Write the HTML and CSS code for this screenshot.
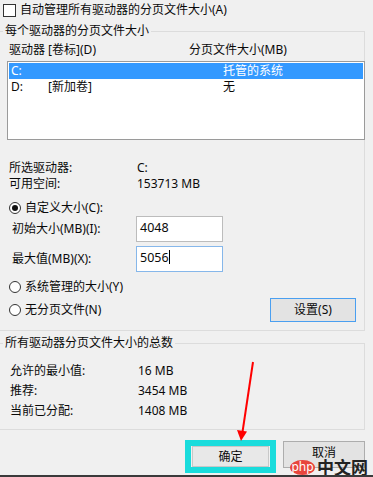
FILE: index.html
```html
<!DOCTYPE html>
<html lang="zh-CN">
<head>
  <meta charset="UTF-8" />
  <meta name="viewport" content="width=device-width, initial-scale=1.0"/>
  <title>虚拟内存</title>
  <link rel="stylesheet" href="styles.css">
</head>
<body>

<div class="dialog">
  <div class="auto-row"><span class="checkbox"></span>自动管理所有驱动器的分页文件大小(A)</div>

  <fieldset class="group group-drive">
    <legend>每个驱动器的分页文件大小</legend>
    <div class="list-head">
      <span>驱动器 [卷标](D)</span>
      <span>分页文件大小(MB)</span>
    </div>
    <div class="listbox">
      <div class="list-row selected"><span>C:</span><span></span><span>托管的系统</span></div>
      <div class="list-row"><span>D:</span><span>[新加卷]</span><span>无</span></div>
    </div>

    <div class="info">
      <span>所选驱动器:</span><span>C:</span>
      <span>可用空间:</span><span>153713 MB</span>
    </div>

    <div class="radio-row custom"><span class="radio checked"></span>自定义大小(C):</div>
    <div class="field-row">
      <span>初始大小(MB)(I):</span>
      <div class="input">4048</div>
    </div>
    <div class="field-row second">
      <span>最大值(MB)(X):</span>
      <div class="input focus">5056<span class="caret"></span></div>
    </div>

    <div class="options">
      <div class="radios">
        <div class="radio-row"><span class="radio"></span>系统管理的大小(Y)</div>
        <div class="radio-row"><span class="radio"></span>无分页文件(N)</div>
      </div>
      <div class="btn set-btn">设置(S)</div>
    </div>
  </fieldset>

  <fieldset class="group group-total">
    <legend>所有驱动器分页文件大小的总数</legend>
    <div class="totals">
      <span>允许的最小值:</span><span>16 MB</span>
      <span>推荐:</span><span>3454 MB</span>
      <span>当前已分配:</span><span>1408 MB</span>
    </div>
  </fieldset>

  <div class="actions">
    <div class="highlight"><div class="btn ok-btn">确定</div></div>
    <div class="btn cancel-btn">取消</div>
  </div>
</div>

<svg class="arrow" width="373" height="477" viewBox="0 0 373 477">
  <line x1="253" y1="362" x2="242.5" y2="432" stroke="#ff0000" stroke-width="2"/>
  <polygon points="237,430 247,431.5 241,441" fill="#ff0000"/>
</svg>

<div class="watermark"><span class="php">php</span><span class="cn">中文网</span></div>
<div class="bottom-bar"></div>

</body>
</html>
```

FILE: styles.css
```css
* { box-sizing: border-box; }
body {
  margin: 0;
  width: 373px;
  height: 477px;
  overflow: hidden;
  position: relative;
  background: #f0f0f0;
  color: #0a0a0a;
  font-family: "Noto Sans", "Noto Sans CJK SC", sans-serif;
  font-size: 12px;
  line-height: 16px;
}
.auto-row {
  display: flex;
  align-items: center;
  gap: 4px;
  height: 17px;
  padding: 3px 0 0 3px;
}
.checkbox {
  width: 13px;
  height: 13px;
  background: #fff;
  border: 1px solid #333;
}
.group {
  margin: 6px 0 0 -1px;
  width: 366px;
  padding: 0 0 8px 0;
  border: 1px solid #dcdcdc;
  min-width: 0;
}
.group legend {
  margin-left: 3px;
  padding: 0 2px;
  line-height: 16px;
}
.list-head {
  display: flex;
  margin-top: 3px;
  padding-left: 9px;
}
.list-head span:first-child { width: 180px; }
.listbox {
  margin: 3px -1px 0 7px;
  height: 79px;
  background: #fff;
  border: 1px solid #9a9a9a;
  padding: 1px;
}
.list-row {
  display: grid;
  grid-template-columns: 37px 175px 1fr;
  height: 16px;
  padding-left: 2px;
}
.list-row.selected {
  background: #3399ff;
  color: #fff;
}
.info, .totals {
  display: grid;
  grid-template-columns: 128px 1fr;
  margin-top: 20px;
  padding-left: 9px;
}
.radio-row {
  display: flex;
  align-items: center;
  gap: 4px;
  height: 16px;
  padding-left: 9px;
}
.radio-row.custom { margin-top: 8px; }
.radio {
  position: relative;
  width: 12px;
  height: 12px;
  border: 1px solid #333;
  border-radius: 50%;
  background: #fff;
}
.radio.checked::after {
  content: "";
  position: absolute;
  left: 2px;
  top: 2px;
  width: 6px;
  height: 6px;
  border-radius: 50%;
  background: #111;
}
.field-row {
  display: grid;
  grid-template-columns: 124px 87px;
  align-items: center;
  padding-left: 12px;
  height: 26px;
}
.field-row.second { margin-top: 4px; }
.input {
  height: 26px;
  background: #fff;
  border: 1px solid #bcbcbc;
  padding: 3px 0 0 3px;
  font-size: 12.5px;
}
.input.focus { border-color: #86b7ea; }
.caret {
  display: inline-block;
  width: 1px;
  height: 14px;
  background: #000;
  vertical-align: -2px;
}
.options {
  display: flex;
  justify-content: space-between;
  align-items: flex-end;
  margin-top: 7px;
  padding-right: 8px;
}
.radios {
  display: flex;
  flex-direction: column;
  gap: 7px;
  margin-bottom: 4px;
}
.btn {
  display: flex;
  align-items: center;
  justify-content: center;
  background: #e3e3e3;
  border: 1px solid #adadad;
}
.set-btn {
  width: 86px;
  height: 24px;
  border-color: #4a9ff0;
}
.group-total { margin-top: 4px; }
.totals {
  margin-top: 10px;
  padding-left: 10px;
  grid-auto-rows: 20px;
  align-items: center;
}
.actions {
  display: flex;
  align-items: flex-start;
  gap: 7px;
  margin-top: 10px;
  padding-left: 185px;
}
.highlight {
  width: 91px;
  height: 33px;
  border: 6px solid #1adcdc;
  padding: 0 1px;
  background: #f0f0f0;
}
.ok-btn {
  height: 21px;
  background: #e8e8e8;
  border-color: #c8c8c8;
}
.cancel-btn {
  width: 82px;
  height: 27px;
  margin-top: 1px;
  align-items: flex-start;
  padding-top: 3px;
}
.arrow {
  position: absolute;
  left: 0;
  top: 0;
  pointer-events: none;
}
.watermark {
  position: absolute;
  left: 290px;
  top: 458px;
  display: flex;
  align-items: center;
  gap: 2px;
}
.php {
  flex-shrink: 0;
  width: 25px;
  height: 15px;
  border-radius: 50%;
  background: #e8453c;
  color: #fff;
  font-size: 12px;
  line-height: 14px;
  text-align: center;
}
.cn {
  font-family: "Noto Sans CJK SC", sans-serif;
  font-size: 17px;
  font-weight: bold;
  line-height: 18px;
  color: #222;
}
.bottom-bar {
  position: absolute;
  left: 0;
  bottom: 0;
  width: 100%;
  height: 2px;
  background: #3a3a3a;
}
```
